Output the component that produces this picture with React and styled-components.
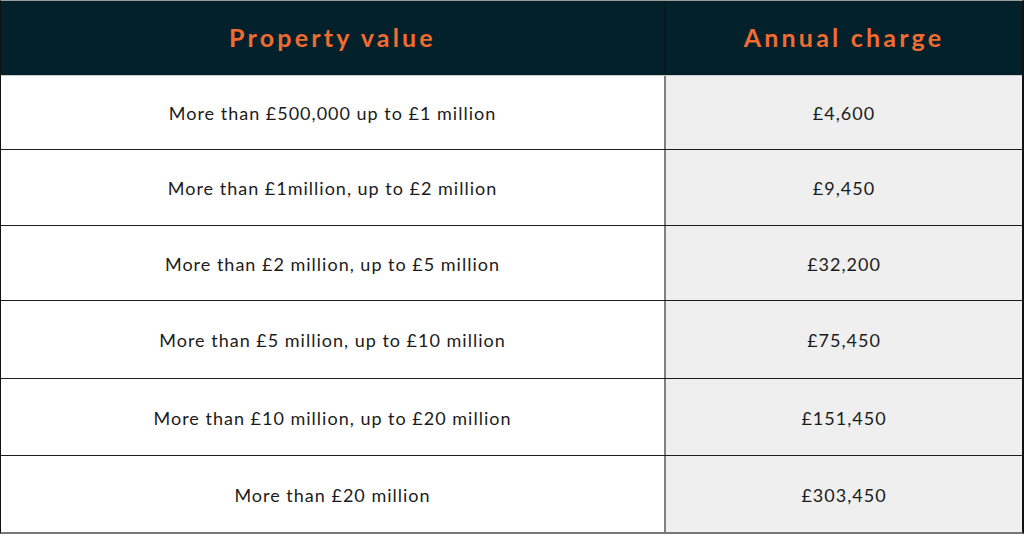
import React from 'react';
import styled, { createGlobalStyle } from 'styled-components';

const rows = [
  ['More than £500,000 up to £1 million', '£4,600'],
  ['More than £1million, up to £2 million', '£9,450'],
  ['More than £2 million, up to £5 million', '£32,200'],
  ['More than £5 million, up to £10 million', '£75,450'],
  ['More than £10 million, up to £20 million', '£151,450'],
  ['More than £20 million', '£303,450'],
];

// row heights read off the reference, they are not all equal
const heights = [74, 76, 75, 78, 77, 76];

const Global = createGlobalStyle`
  body {
    margin: 0;
    background: #ffffff;
    font-family: Lato, "Liberation Sans", sans-serif;
  }
`;

const Table = styled.div`
  width: 1024px;
  box-sizing: border-box;
  border-top: 1px solid #9c9c9c;
  border-left: 1px solid #111;
  border-right: 2px solid #111;
  border-bottom: 2px solid #777;
`;

const Row = styled.div`
  display: grid;
  grid-template-columns: 663px 1fr;
  height: ${p => (p.$head ? 75 : p.$h || 76)}px;
  box-sizing: border-box;
  border-bottom: ${p => (p.$last ? 'none' : p.$head ? '1px solid #c9cdce' : '1px solid #1c1c1c')};
  background: ${p => (p.$head ? '#02212a' : '#ffffff')};
`;

const Cell = styled.div`
  display: flex;
  align-items: center;
  justify-content: center;
  box-sizing: border-box;
  color: #1b1b1b;
  font-size: 18px;
  letter-spacing: 1px;
  padding-top: 1px;
  background: ${p => (p.$shade ? '#efefef' : 'transparent')};
  border-left: ${p => (p.$shade ? '2px solid #808080' : 'none')};
`;

const HeadCell = styled.div`
  display: flex;
  align-items: center;
  justify-content: center;
  box-sizing: border-box;
  color: #f26b31;
  font-size: 25px;
  font-weight: 700;
  letter-spacing: 3.2px;
  padding-bottom: 2px;
  border-left: ${p => (p.$right ? '2px solid #011a22' : 'none')};
`;

export default function App() {
  return (
    <>
      <Global />
      <Table>
        <Row $head>
          <HeadCell>Property value</HeadCell>
          <HeadCell $right>Annual charge</HeadCell>
        </Row>
        {rows.map(([value, charge], i) => (
          <Row key={i} $h={heights[i]} $last={i === rows.length - 1}>
            <Cell>{value}</Cell>
            <Cell $shade>{charge}</Cell>
          </Row>
        ))}
      </Table>
    </>
  );
}
